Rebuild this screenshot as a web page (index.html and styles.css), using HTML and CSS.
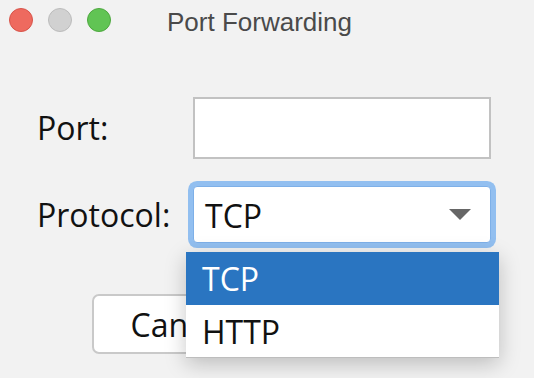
FILE: index.html
```html
<!DOCTYPE html>
<html lang="en">
<head>
  <meta charset="UTF-8" />
  <title>Port Forwarding</title>
  <link rel="stylesheet" href="styles.css">
</head>
<body>

  <div class="window">
    <div class="titlebar">
      <span class="light close"></span>
      <span class="light minimize"></span>
      <span class="light zoom"></span>
      <span class="title">Port Forwarding</span>
    </div>

    <!-- form -->
    <div class="form">
      <label class="field-label" for="port">Port:</label>
      <input type="text" id="port" class="text-field">

      <span class="field-label">Protocol:</span>
      <div class="combo">
        <span class="combo-value">TCP</span>
        <span class="combo-arrow"></span>

        <ul class="popup">
          <li class="popup-item selected">TCP</li>
          <li class="popup-item">HTTP</li>
        </ul>
      </div>
    </div>

    <div class="button-group">
      <button>Cancel</button>
      <button>OK</button>
    </div>
  </div>

</body>
</html>
```

FILE: styles.css
```css
body {
  margin: 0;
  background: #f2f2f2;
  font-family: "Open Sans", "DejaVu Sans", sans-serif;
}

.window {
  width: 534px;
  height: 378px;
  overflow: hidden;
}

.titlebar {
  height: 40px;
  display: flex;
  align-items: center;
  padding-left: 9px;
  gap: 15px;
}

.light {
  width: 22px;
  height: 22px;
  border-radius: 50%;
  border: 1px solid;
}

.close {
  background: #ee6a5f;
  border-color: #d8544a;
}

.minimize {
  background: #d1d1d1;
  border-color: #bcbcbc;
}

.zoom {
  background: #61c454;
  border-color: #4ea83f;
}

.title {
  margin-left: 41px;
  padding-top: 3px;
  font-family: "Liberation Sans", Arial, sans-serif;
  font-size: 26px;
  line-height: 30px;
  color: #4a4a4a;
}

.form {
  display: grid;
  grid-template-columns: 156px 298px;
  align-items: center;
  row-gap: 27px;
  margin-top: 57px;
  padding-left: 37px;
}

.field-label {
  font-size: 32px;
  line-height: 40px;
  color: #111;
}

.text-field {
  height: 62px;
  box-sizing: border-box;
  margin: 0;
  border: 2px solid #c2c2c2;
  background: white;
  outline: none;
}

.combo {
  position: relative;
  height: 57px;
  box-sizing: border-box;
  display: flex;
  align-items: center;
  justify-content: space-between;
  padding: 0 19px 0 11px;
  background: white;
  border: 1px solid #7eb0e8;
  border-radius: 4px;
  box-shadow: 0 0 0 5px #92bff0;
}

.combo-value {
  font-size: 32px;
  color: #111;
  margin-top: 2px;
}

.combo-arrow {
  width: 0;
  height: 0;
  border-left: 11px solid transparent;
  border-right: 11px solid transparent;
  border-top: 11px solid #666;
}

.popup {
  position: absolute;
  top: calc(100% + 10px);
  left: -8px;
  width: 313px;
  margin: 0;
  padding: 0;
  list-style: none;
  background: white;
  border-bottom: 1px solid #bdbdbd;
  box-shadow: 0 6px 20px rgb(0 0 0 / 0.22);
  z-index: 2;
}

.popup-item {
  height: 52px;
  display: flex;
  align-items: center;
  padding-left: 16px;
  font-size: 32px;
  color: #111;
}

.popup-item.selected {
  height: 53px;
  background: #2a75c1;
  color: white;
}

.button-group {
  display: flex;
  gap: 14px;
  margin-top: 51px;
  padding-left: 92px;
}

button {
  width: 176px;
  height: 60px;
  font-family: inherit;
  font-size: 32px;
  color: #111;
  background: white;
  border: 2px solid #c9c9c9;
  border-radius: 7px;
  padding: 0;
}
```
